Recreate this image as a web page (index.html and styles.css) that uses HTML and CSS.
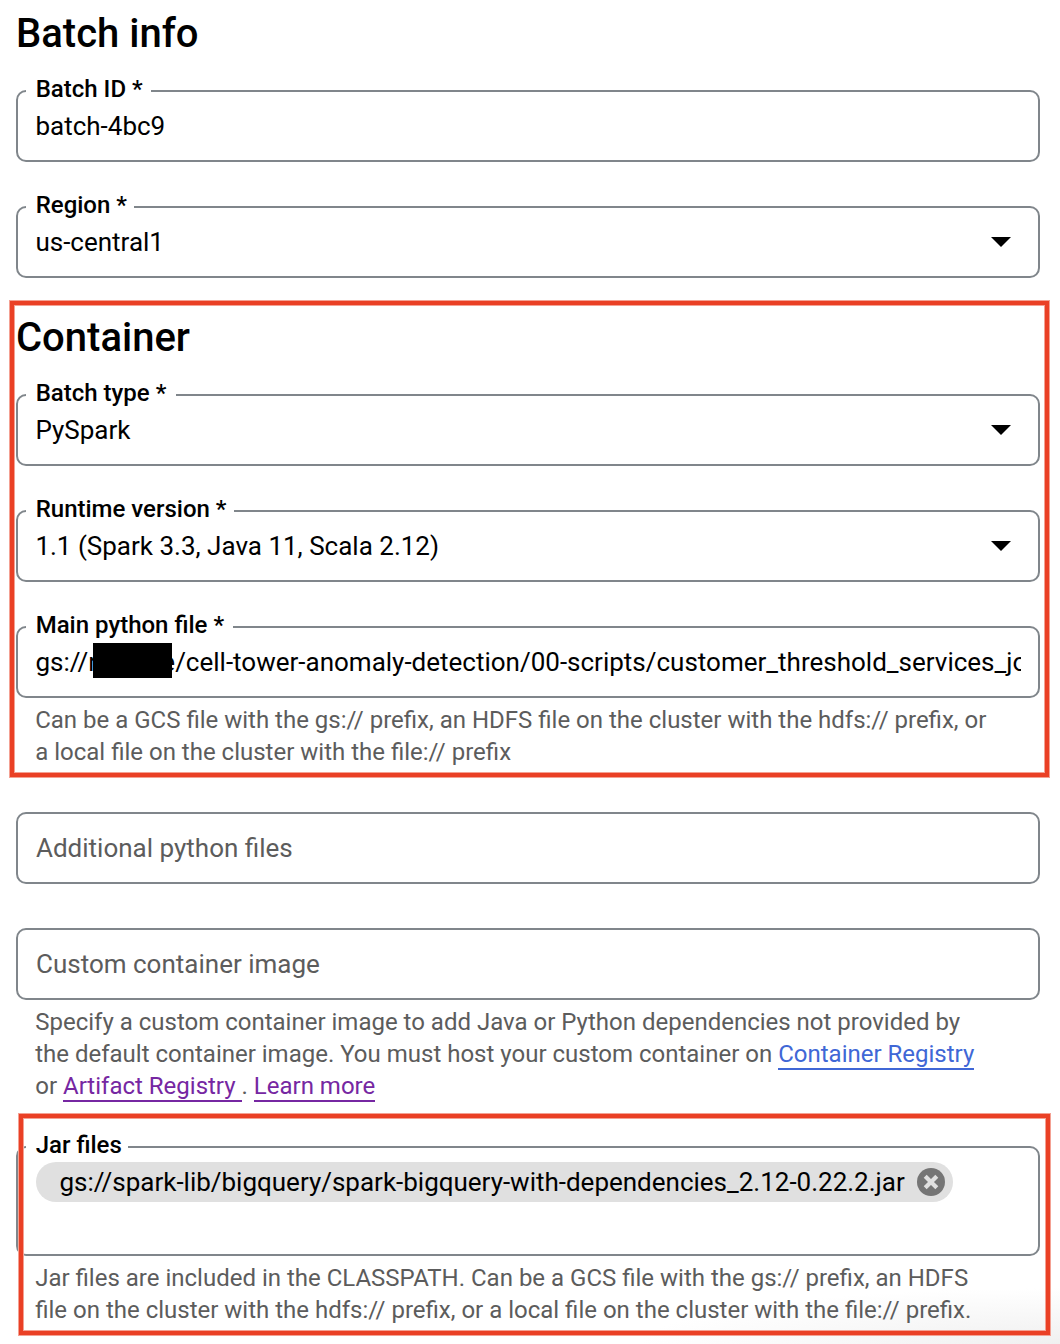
FILE: index.html
```html
<!DOCTYPE html>
<html lang="en">
<head>
<meta charset="utf-8">
<title>Create batch</title>
<link rel="stylesheet" href="styles.css">
</head>
<body>
<main class="form">
  <section class="section">
    <h2 class="heading">Batch info</h2>
    <div class="field">
      <span class="label">Batch ID *</span>
      <span class="value">batch-4bc9</span>
    </div>
    <div class="field">
      <span class="label label-region">Region *</span>
      <span class="value">us-central1</span>
      <svg class="arrow" viewBox="0 0 20 10"><path d="M0 0h20L10 10z"/></svg>
    </div>
  </section>

  <section class="section container-section">
    <h2 class="heading">Container</h2>
    <div class="field">
      <span class="label label-wide">Batch type *</span>
      <span class="value">PySpark</span>
      <svg class="arrow" viewBox="0 0 20 10"><path d="M0 0h20L10 10z"/></svg>
    </div>
    <div class="field">
      <span class="label">Runtime version *</span>
      <span class="value">1.1 (Spark 3.3, Java 11, Scala 2.12)</span>
      <svg class="arrow" viewBox="0 0 20 10"><path d="M0 0h20L10 10z"/></svg>
    </div>
    <div class="field with-hint">
      <span class="label label-wide">Main python file *</span>
      <span class="value">gs://r<span class="redacted"></span>e/cell-tower-anomaly-detection/00-scripts/customer_threshold_services_jo</span>
    </div>
    <p class="hint">Can be a GCS file with the gs:// prefix, an HDFS file on the cluster with the hdfs:// prefix, or<br>a local file on the cluster with the file:// prefix</p>
    <div class="highlight highlight-container"></div>
  </section>

  <section class="section extras-section">
    <div class="field"><span class="value placeholder">Additional python files</span></div>
    <div class="field with-hint"><span class="value placeholder">Custom container image</span></div>
    <p class="hint">Specify a custom container image to add Java or Python dependencies not provided by<br>the default container image. You must host your custom container on <a class="link" href="#">Container Registry</a><br>or <a class="link visited" href="#">Artifact Registry&nbsp;</a>. <a class="link visited" href="#">Learn more</a></p>
  </section>

  <section class="section jar-section">
    <div class="field tall with-hint">
      <span class="label label-jar">Jar files</span>
      <span class="chip">
        <span class="chip-text">gs://spark-lib/bigquery/spark-bigquery-with-dependencies_2.12-0.22.2.jar</span>
        <svg class="remove" viewBox="0 0 28 28"><circle cx="14" cy="14" r="14" fill="#757575"/><path d="M8.2 8.2l11.6 11.6M19.8 8.2L8.2 19.8" stroke="#e0e0e0" stroke-width="4.2"/></svg>
      </span>
    </div>
    <p class="hint">Jar files are included in the CLASSPATH. Can be a GCS file with the gs:// prefix, an HDFS<br>file on the cluster with the hdfs:// prefix, or a local file on the cluster with the file:// prefix.</p>
    <div class="highlight highlight-jar"></div>
  </section>
</main>
</body>
</html>
```
FILE: styles.css
```css
* { box-sizing: border-box; }

body {
  margin: 0;
  background: #fff;
  color: #000;
  font-family: Roboto, "Liberation Sans", sans-serif;
  overflow: hidden;
}

.form {
  width: 1060px;
  height: 1344px;
  padding: 10px 20px 0 16px;
  overflow: hidden;
  background: radial-gradient(ellipse 420px 56px at 100% 100%, #f0f0f0, #fff) no-repeat;
}

.section { position: relative; }
.container-section { margin-top: -8px; }
.extras-section { padding-top: 44px; }
.jar-section { padding-top: 44px; }

.heading {
  margin: 0 0 32px;
  font-size: 40px;
  font-weight: 500;
  line-height: 48px;
}

.field {
  position: relative;
  display: flex;
  align-items: center;
  height: 72px;
  margin-bottom: 44px;
  padding: 0 17px 0 18px;
  border: 2px solid #80868b;
  border-radius: 10px;
}
.field.with-hint { margin-bottom: 6px; }
.field.tall {
  height: 110px;
  align-items: flex-start;
  padding-top: 14px;
}

.label {
  position: absolute;
  left: 8px;
  top: -18px;
  padding: 0 8px 0 9.7px;
  background: #fff;
  font-size: 24px;
  font-weight: 500;
  line-height: 30px;
}
.label-region { padding-right: 7px; }
.label-wide { padding-right: 9.3px; }
.label-jar { padding-right: 6.3px; }

.value {
  flex: 1;
  margin-left: -0.6px;
  overflow: hidden;
  white-space: nowrap;
  font-size: 26px;
  line-height: 40px;
}
.placeholder {
  margin-left: 0;
  color: #5c5c5c;
}

.redacted {
  position: relative;
  top: -3.5px;
  display: inline-block;
  width: 79.5px;
  height: 34.5px;
  margin: 0 -10.8px 0 -4.5px;
  vertical-align: middle;
  background: #000;
}

.arrow {
  width: 20px;
  height: 10px;
  margin-right: 10px;
}

.hint {
  margin: 0;
  padding-left: 19.2px;
  color: #5c5c5c;
  font-size: 24px;
  line-height: 32px;
  white-space: nowrap;
}

.link {
  color: #4067d6;
  text-decoration: none;
  border-bottom: 2px solid currentColor;
}
.link.visited { color: #7627a2; }

.chip {
  display: flex;
  align-items: center;
  gap: 12px;
  height: 40px;
  padding: 0 8px 0 23.4px;
  border-radius: 20px;
  background: #e0e0e0;
  font-size: 26px;
  letter-spacing: -0.007px;
}
.remove { width: 28px; height: 28px; }

.highlight {
  position: absolute;
  border: 4px solid #ea4025;
  box-shadow: 0 0 0 1px #f4a193, inset 0 0 0 1px #f4a193;
}
.highlight-container { left: -6px; top: -13px; width: 1039px; height: 476px; }
.highlight-jar { left: 3px; top: 12px; width: 1031px; height: 221px; }
```
